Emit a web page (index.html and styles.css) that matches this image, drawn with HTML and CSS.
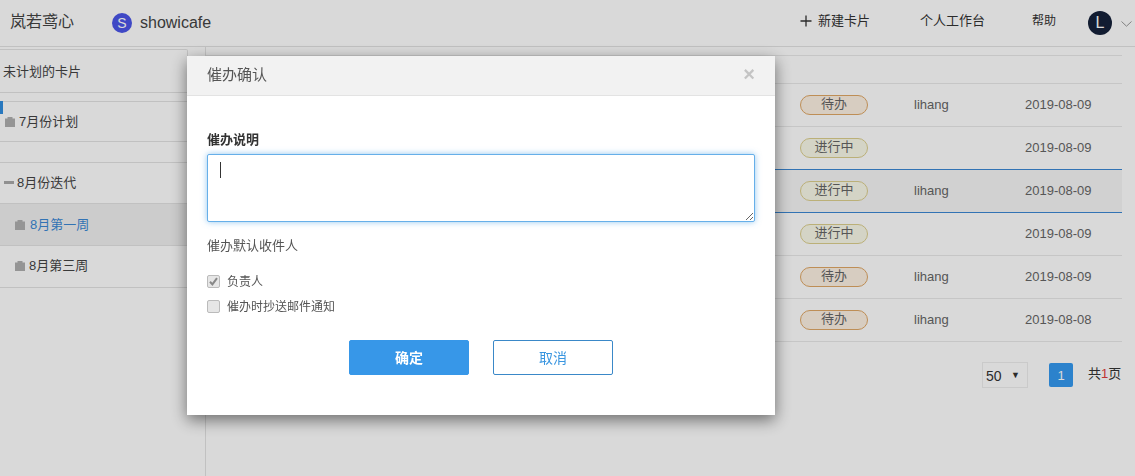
FILE: index.html
```html
<!DOCTYPE html>
<html lang="zh">
<head>
<meta charset="utf-8">
<title>催办确认</title>
<link rel="stylesheet" href="styles.css">
</head>
<body>
<div class="page">
  <header class="topbar">
    <div class="brand">岚若鸢心</div>
    <div class="project"><span class="project-logo">S</span><span class="project-name">showicafe</span></div>
    <nav class="topnav">
      <a class="nav-new"><svg class="plus" width="12" height="12" viewBox="0 0 12 12"><path d="M6 0.5V11.5M0.5 6H11.5" stroke="#333" stroke-width="1.3" fill="none"/></svg><span>新建卡片</span></a>
      <a class="nav-desk">个人工作台</a>
      <a class="nav-help">帮助</a>
      <span class="avatar">L</span>
      <svg class="caret-down" width="11" height="6" viewBox="0 0 11 6"><path d="M0.5 0.5L5.5 5.2L10.5 0.5" stroke="#999" fill="none"/></svg>
    </nav>
  </header>
  <div class="body">
    <aside class="sidebar">
      <div class="side-card">未计划的卡片</div>
      <div class="side-group first">
        <span class="side-mark"></span>
        <div class="side-row"><svg class="clip" width="10" height="10" viewBox="0 0 10 10"><path d="M0 1.5H2.5V0H7.5V1.5H10V10H0Z" fill="#b0b0b0"/></svg>7月份计划</div>
      </div>
      <div class="side-group second">
        <div class="side-row iter"><span class="dash"></span>8月份迭代</div>
        <div class="side-row sub active"><svg class="clip" width="10" height="10" viewBox="0 0 10 10"><path d="M0 1.5H2.5V0H7.5V1.5H10V10H0Z" fill="#b0b0b0"/></svg>8月第一周</div>
        <div class="side-row sub last"><svg class="clip" width="10" height="10" viewBox="0 0 10 10"><path d="M0 1.5H2.5V0H7.5V1.5H10V10H0Z" fill="#b0b0b0"/></svg>8月第三周</div>
      </div>
    </aside>
    <main class="content">
      <div class="table-head"></div>
      <div class="row"><span class="tag todo">待办</span><span class="who">lihang</span><span class="date">2019-08-09</span></div>
      <div class="row"><span class="tag doing">进行中</span><span class="who"></span><span class="date">2019-08-09</span></div>
      <div class="row selected"><span class="tag doing">进行中</span><span class="who">lihang</span><span class="date">2019-08-09</span></div>
      <div class="row after-selected"><span class="tag doing">进行中</span><span class="who"></span><span class="date">2019-08-09</span></div>
      <div class="row"><span class="tag todo">待办</span><span class="who">lihang</span><span class="date">2019-08-09</span></div>
      <div class="row"><span class="tag todo">待办</span><span class="who">lihang</span><span class="date">2019-08-08</span></div>
      <div class="pager">
        <div class="size">50<span class="size-arrow">▼</span></div>
        <span class="page-num">1</span>
        <span class="page-total">共<em>1</em>页</span>
      </div>
    </main>
  </div>
</div>
<div class="backdrop"></div>
<section class="modal">
  <div class="modal-head"><span class="modal-title">催办确认</span><span class="close">×</span></div>
  <div class="modal-body">
    <div class="field-label">催办说明</div>
    <div class="area-wrap"><textarea class="area"></textarea><span class="text-caret"></span></div>
    <div class="recv">催办默认收件人</div>
    <div class="check"><span class="box"><svg width="9" height="9" viewBox="0 0 9 9"><path d="M1 4.8L3.4 7.4L8 1.2" stroke="#888" stroke-width="2" fill="none"/></svg></span>负责人</div>
    <div class="check second-check"><span class="box"></span>催办时抄送邮件通知</div>
    <div class="actions"><button class="btn primary">确定</button><button class="btn ghost">取消</button></div>
  </div>
</section>
</body>
</html>
```
FILE: styles.css
```css
* { box-sizing: border-box; }
html, body { margin: 0; height: 100%; }
body {
  width: 1135px;
  height: 476px;
  overflow: hidden;
  background: #fff;
  color: #333;
  font-family: "Liberation Sans", "Noto Sans CJK SC", sans-serif;
  font-size: 12px;
}
.page { height: 476px; display: flex; flex-direction: column; }
.topbar {
  height: 47px;
  flex: none;
  display: flex;
  align-items: center;
  border-bottom: 1px solid #e3e3e3;
  padding: 0 0 1px 10px;
}
.brand { font-size: 16px; line-height: 20px; width: 102px; color: #444; padding-bottom: 1px; }
.project { display: flex; align-items: center; gap: 8px; }
.project-logo {
  width: 20px; height: 20px; border-radius: 50%;
  background: #4a55e8; color: #fff;
  display: flex; align-items: center; justify-content: center;
  font-size: 14px;
}
.project-name { font-size: 16px; color: #444; }
.topnav { margin-left: auto; display: flex; align-items: center; height: 100%; color: #333; }
.nav-new { display: flex; align-items: center; gap: 6px; width: 120px; }
.plus { margin-top: -3px; }
.nav-new span, .nav-desk { font-size: 13px; line-height: 16px; padding-bottom: 3px; }
.nav-desk { width: 112px; }
.nav-help { width: 56px; line-height: 16px; padding-bottom: 3px; }
.avatar {
  width: 24px; height: 24px; border-radius: 50%;
  background: #16213a; color: #fff;
  display: flex; align-items: center; justify-content: center;
  font-size: 16px;
}
.caret-down { margin: 2px 3px 0 9px; }
.body { flex: 1; display: flex; min-height: 0; }
.sidebar { width: 206px; flex: none; border-right: 1px solid #e3e3e3; padding-top: 2px; position: relative; }
.side-card {
  width: 188px; height: 44px;
  border: 1px solid #e3e3e3; border-left: 0;
  border-radius: 0 2px 0 0;
  display: flex; align-items: center;
  padding: 0 0 2px 3px;
  font-size: 13px;
  color: #444;
}
.side-group { border-bottom: 1px solid #e3e3e3; }
.side-group.first { margin-top: 8px; border-top: 1px solid #e3e3e3; height: 41px; position: relative; }
.side-group.second { margin-top: 20px; border-top: 1px solid #e3e3e3; border-bottom: 0; }
.side-mark { position: absolute; left: 0; top: -1px; width: 3px; height: 13px; background: #2f8ee0; }
.side-row { display: flex; align-items: center; height: 40px; padding: 0 0 3px 5px; gap: 4px; font-size: 13px; color: #444; }
.clip { margin-top: 2px; }
.side-group.second .side-row { height: 41px; border-bottom: 1px solid #e3e3e3; padding-bottom: 3px; }
.side-group.second .side-row.sub { height: 42px; padding-left: 15px; padding-bottom: 2px; }
.side-group.second .side-row.sub.last { padding-bottom: 4px; }
.side-row.iter { padding-left: 4px; gap: 3px; }
.dash { width: 10px; height: 3px; background: #aaa; margin-top: 2px; }
.side-row.active { background: #f0f0f0; color: #3b88d4; gap: 5px; }
.content { flex: 1; padding: 8px 13px 0 0; min-width: 0; }
.table-head { height: 29px; border-top: 1px solid #e9e9e9; border-bottom: 1px solid #e9e9e9; }
.row {
  height: 43px;
  display: flex;
  align-items: center;
  border-bottom: 1px solid #e9e9e9;
  padding-left: 594px;
  color: #555;
}
.row.selected { background: #f6f6f6; border-top: 1px solid #3b88d4; border-bottom: 1px solid #3b88d4; margin-top: -1px; height: 44px; }
.tag {
  width: 68px; height: 20px;
  border-radius: 10px;
  border: 1px solid;
  display: flex; align-items: center; justify-content: center;
  font-size: 13px;
  line-height: 16px;
  padding-bottom: 3px;
  color: #666;
  flex: none;
}
.tag.todo { background: #fdf1e3; border-color: #e0a765; }
.tag.doing { background: #fafae9; border-color: #dccf8e; }
.who { width: 111px; margin-left: 46px; font-size: 13px; color: #666; flex: none; padding-bottom: 2px; }
.date { font-size: 13px; color: #666; padding-bottom: 2px; }
.pager { display: flex; align-items: center; margin-top: 20px; padding-left: 776px; }
.size {
  width: 46px; height: 26px;
  border: 1px solid #eee;
  display: flex; align-items: center; justify-content: space-between;
  padding: 2px 7px 0 3px;
  font-size: 14px;
}
.size-arrow { font-size: 9px; color: #333; margin-top: -2px; }
.page-num {
  width: 24px; height: 24px; margin-left: 21px;
  background: #3499f0; border-radius: 2px; color: #fff;
  display: flex; align-items: center; justify-content: center;
  font-size: 13px;
}
.page-total { margin-left: 15px; font-size: 13px; line-height: 16px; padding-bottom: 3px; }
.page-total em { color: #e03b3b; font-style: normal; }
.backdrop { position: fixed; inset: 0; background: rgba(0, 0, 0, 0.15); }
.modal {
  position: fixed;
  left: 187px; top: 56px;
  width: 588px; height: 359px;
  background: #fff;
  box-shadow: 0 5px 15px rgba(0, 0, 0, 0.5);
  display: flex; flex-direction: column;
}
.modal-head {
  height: 40px; flex: none;
  background: #f2f2f2;
  border-bottom: 1px solid #e3e3e3;
  display: flex; align-items: center; justify-content: space-between;
  padding: 0 20px;
  color: #555;
}
.modal-title { font-size: 15px; line-height: 18px; padding-bottom: 2px; }
.close { font-size: 20px; font-weight: 700; color: #c4c4c4; line-height: 20px; padding-bottom: 3px; }
.modal-body { padding: 35px 20px 0; flex: 1; }
.field-label { font-size: 13px; font-weight: 700; color: #333; line-height: 17px; height: 17px; }
.area-wrap { position: relative; margin-top: 6px; height: 68px; }
.area {
  display: block;
  width: 548px; height: 68px;
  border: 1px solid #66afe9;
  border-radius: 2px;
  outline: 0;
  background: #fff;
  box-shadow: 0 0 6px rgba(102, 175, 233, 0.7);
  resize: both;
}
.text-caret { position: absolute; left: 13px; top: 8px; width: 1px; height: 16px; background: #333; }
.recv { margin-top: 15px; font-size: 13px; line-height: 18px; color: #555; }
.check { display: flex; align-items: center; gap: 7px; margin-top: 16px; height: 18px; font-size: 12px; color: #555; }
.second-check { margin-top: 7px; }
.box {
  width: 13px; height: 13px;
  border: 1px solid #bbb;
  border-radius: 2px;
  background: #e6e6e6;
  margin-top: 2px;
  display: flex; align-items: center; justify-content: center;
}
.actions { display: flex; justify-content: center; gap: 24px; margin-top: 26px; }
.btn {
  width: 120px; height: 35px;
  border-radius: 2px;
  font: inherit;
  font-size: 14px;
  line-height: 16px;
  padding: 0;
}
.btn.primary { background: #3797e8; border: 1px solid #3797e8; color: #fff; font-weight: 700; }
.btn.ghost { background: #fff; border: 1px solid #3a88c8; color: #3a96e0; }
```
